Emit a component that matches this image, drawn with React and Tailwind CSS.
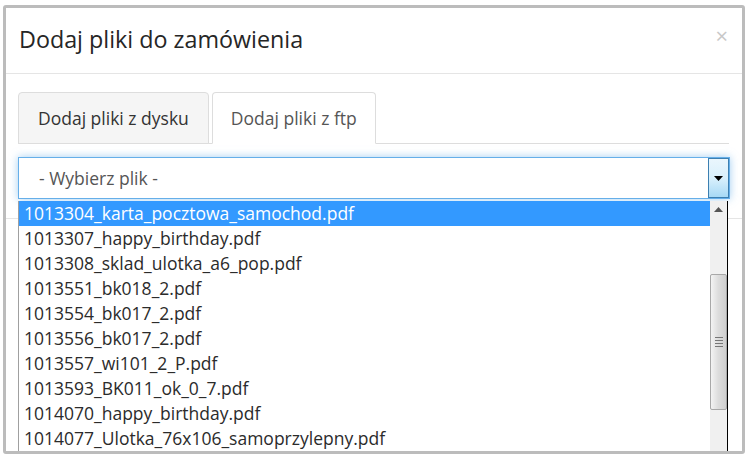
import React from 'react';

const files = [
  '1013304_karta_pocztowa_samochod.pdf',
  '1013307_happy_birthday.pdf',
  '1013308_sklad_ulotka_a6_pop.pdf',
  '1013551_bk018_2.pdf',
  '1013554_bk017_2.pdf',
  '1013556_bk017_2.pdf',
  '1013557_wi101_2_P.pdf',
  '1013593_BK011_ok_0_7.pdf',
  '1014070_happy_birthday.pdf',
  '1014077_Ulotka_76x106_samoprzylepny.pdf',
];

const font = { fontFamily: '"Open Sans", "Noto Sans", sans-serif' };

export default function App() {
  return (
    <div className="w-[750px] h-[460px] bg-white pl-[3px] pt-[5px] overflow-hidden" style={font}>
      <div className="relative w-[742px] h-[449px] border-[3px] border-[#bcbcbc] rounded-[3px] bg-white overflow-hidden">
        {/* Header */}
        <div className="flex items-start justify-between h-[66px] border-b border-[#e5e5e5] pl-[13px] pr-[14px]">
          <h4 className="pt-[16px] text-[23.3px] leading-[30px] font-medium text-[#262626]">Dodaj pliki do zamówienia</h4>
          <span className="pt-[12px] text-[22px] leading-[30px] text-[#c8c8c8]">×</span>
        </div>

        {/* Body */}
        <div className="h-[145px] border-b border-[#e5e5e5] px-[12px] pt-[18px]">
          <div className="flex border-b border-[#ddd] h-[52px] mr-[1px]">
            <div className="h-[52px] px-[19px] flex items-center border border-[#ddd] rounded-t-[4px] bg-[#f5f5f5] text-[17.5px] text-[#333]">
              Dodaj pliki z dysku
            </div>
            <div className="ml-[3px] h-[52px] -mb-px px-[18px] flex items-center border border-[#ddd] border-b-white rounded-t-[4px] bg-white text-[17.5px] text-[#555]">
              Dodaj pliki z ftp
            </div>
          </div>

          <div className="relative mt-[13px] h-[42px] border border-[#66afe9] shadow-[0_0_8px_rgba(102,175,233,0.6)] bg-white flex items-center">
            <span className="pl-[20px] text-[17.5px] text-[#555]">- Wybierz plik -</span>
            <div className="absolute right-0 top-0 w-[21px] h-[40px] border border-[#3c7fb1] bg-gradient-to-b from-[#eaf6fd] via-[#d9f0fc] to-[#a7d9f5] flex items-center justify-center">
              <svg width="9" height="5" viewBox="0 0 9 5"><path d="M0 0h9L4.5 5z" fill="#000" /></svg>
            </div>
          </div>
        </div>

        {/* Open dropdown list */}
        <div className="absolute left-[12px] top-[193px] w-[710px] h-[260px] bg-white border-l border-[#a0a0a0] border-r border-r-black flex">
          <ul className="flex-1 text-[17.5px] leading-[25px] text-[#2b2b2b]">
            {files.map((f, i) => (
              <li key={f} className={i === 0 ? 'h-[25px] pl-[5px] bg-[#3399ff] text-white' : 'h-[25px] pl-[5px]'}>
                {f}
              </li>
            ))}
          </ul>
          <div className="w-[17px] bg-[#f0f0f0] flex flex-col items-center">
            <div className="h-[17px] w-full flex items-center justify-center">
              <svg width="9" height="5" viewBox="0 0 9 5"><path d="M0 5h9L4.5 0z" fill="#555" /></svg>
            </div>
            <div className="mt-[56px] w-[17px] h-[136px] rounded-[2px] border border-[#a8a8a8] bg-gradient-to-r from-[#f3f3f3] via-[#dcdcdc] to-[#cfcfcf] flex flex-col items-center justify-center gap-[2px]">
              <div className="w-[8px] h-px bg-[#777]" />
              <div className="w-[8px] h-px bg-[#777]" />
              <div className="w-[8px] h-px bg-[#777]" />
              <div className="w-[8px] h-px bg-[#777]" />
            </div>
          </div>
        </div>
      </div>
    </div>
  );
}
